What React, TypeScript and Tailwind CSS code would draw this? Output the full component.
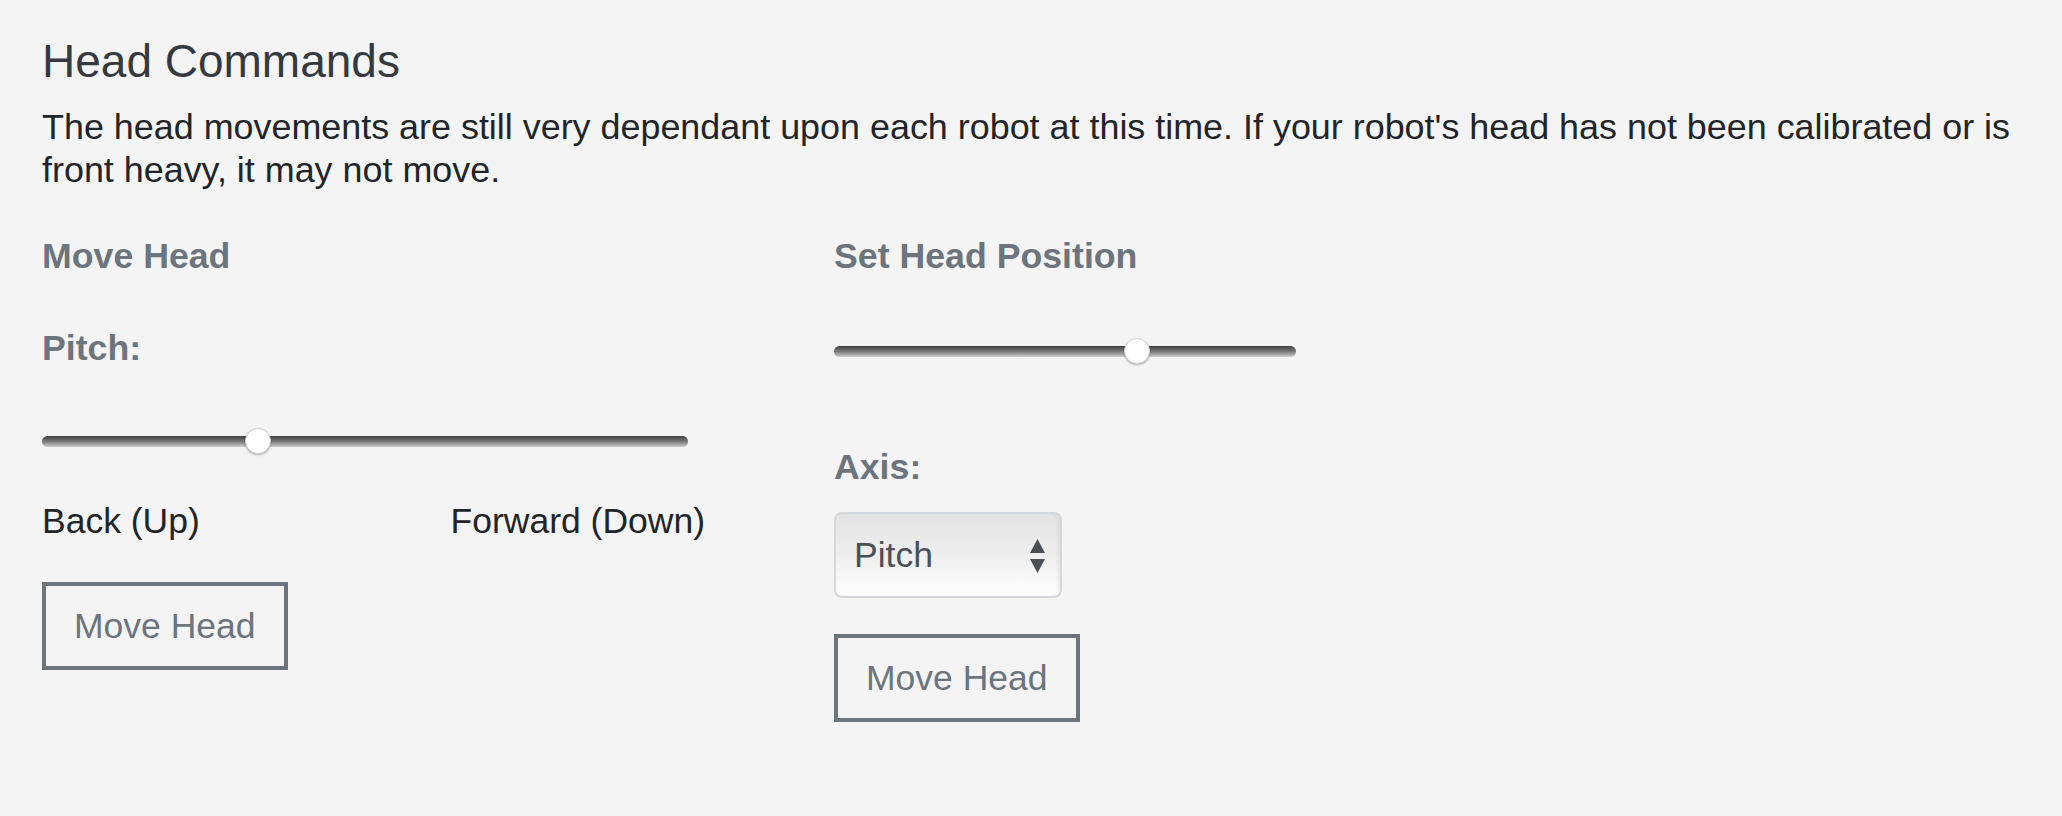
import React from "react";

function Slider({ width, value }: { width: number; value: number }) {
  const thumb = 26;
  const left = (width - thumb) * value;
  return (
    <div className="relative h-[26px]" style={{ width }}>
      <div className="absolute left-0 right-0 top-[8px] h-[11px] rounded-full bg-gradient-to-b from-[#3f3f3f] via-[#7a7a7a] to-[#d0d0d0]" />
      <div
        className="absolute top-0 h-[26px] w-[26px] rounded-full bg-white border border-[#d4d4d4] shadow-[0_1px_2px_rgba(0,0,0,0.3)]"
        style={{ left }}
      />
    </div>
  );
}

function OutlineButton({ children }: { children: React.ReactNode }) {
  return (
    <button className="h-[88px] px-[28px] border-[4px] border-[#6c757d] bg-transparent text-[35.5px] leading-[43px] text-[#6c757d]">
      {children}
    </button>
  );
}

export default function App() {
  return (
    <div
      className="min-h-[816px] w-full bg-[#f4f4f4] px-[42px] pt-[34px]"
      style={{ fontFamily: '"Liberation Sans", Arial, sans-serif' }}
    >
      <h4 className="text-[46px] leading-[54px] text-[#343a40] font-normal">Head Commands</h4>
      <p className="mt-[18px] text-[35.9px] leading-[43px] text-[#212529]">
        The head movements are still very dependant upon each robot at this time. If your robot's head has not been calibrated or is front heavy, it may not move.
      </p>
      <div className="mt-[43px] flex">
        <div className="w-[792px] flex flex-col">
          <div className="text-[35.7px] leading-[42px] font-bold text-[#6c757d]">Move Head</div>
          <div className="mt-[50px] text-[35.7px] leading-[42px] font-bold text-[#6c757d]">Pitch:</div>
          <div className="mt-[59px]">
            <Slider width={646} value={0.327} />
          </div>
          <div className="mt-[46px] w-[663px] flex justify-between text-[35.5px] leading-[43px] text-[#212529]">
            <span>Back (Up)</span>
            <span>Forward (Down)</span>
          </div>
          <div className="mt-[39px]">
            <OutlineButton>Move Head</OutlineButton>
          </div>
        </div>
        <div className="flex flex-col">
          <div className="text-[35.7px] leading-[42px] font-bold text-[#6c757d]">Set Head Position</div>
          <div className="mt-[61px]">
            <Slider width={462} value={0.665} />
          </div>
          <div className="mt-[82px] text-[35.7px] leading-[42px] font-bold text-[#6c757d]">Axis:</div>
          <div className="mt-[24px] relative w-[228px] h-[86px] rounded-[8px] border-[2px] border-[#d3d7db] bg-gradient-to-b from-[#e4e4e4] via-[#eeeeee] to-[#ffffff] flex items-center pl-[18px] shadow-[inset_-3px_0_3px_rgba(0,0,0,0.05)]">
            <span className="text-[35.5px] leading-[43px] text-[#495057]">Pitch</span>
            <svg className="absolute right-[14px] top-[25px]" width="17" height="34" viewBox="0 0 17 34">
              <polygon points="8.5,0 16,14 1,14" fill="#495057" />
              <polygon points="1,20 16,20 8.5,34" fill="#495057" />
            </svg>
          </div>
          <div className="mt-[36px]">
            <OutlineButton>Move Head</OutlineButton>
          </div>
        </div>
      </div>
    </div>
  );
}
